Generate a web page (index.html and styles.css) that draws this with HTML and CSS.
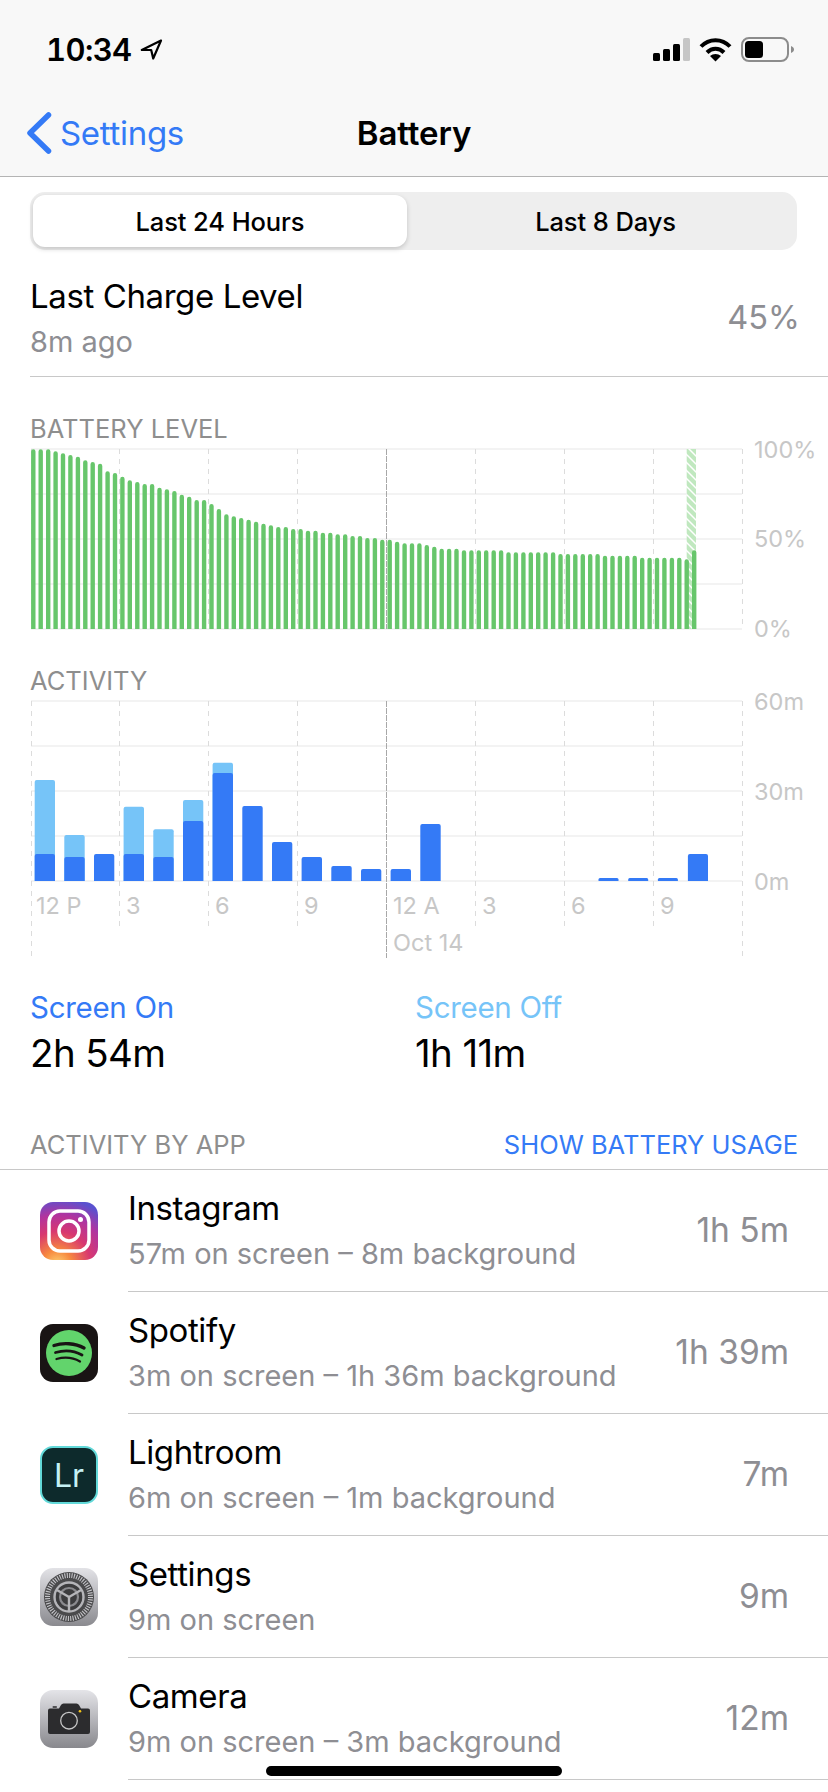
FILE: index.html
```html
<!DOCTYPE html>
<html>
  <head>
    <meta charset="utf-8">
    <title>Battery</title>
    <link rel="stylesheet" href="styles.css">
  </head>
  <body>
  <div class="screen">

    <header class="top">
      <div class="status">
        <div class="clock">
          <span>10:34</span>
          <svg class="arrow" width="23" height="21" viewBox="0 0 23 21"><path d="M21 1.5 1.8 11h9.4l2 8.5z" fill="none" stroke="#000" stroke-width="2.2" stroke-linejoin="round"/></svg>
        </div>
        <div class="status-icons">
          <svg width="37" height="23" viewBox="0 0 37 23">
            <rect x="0" y="15" width="7" height="8" rx="1.5"/>
            <rect x="10" y="11" width="7" height="12" rx="1.5"/>
            <rect x="20" y="6" width="7" height="17" rx="1.5"/>
            <rect x="30" y="0" width="7" height="23" rx="1.5" fill="#c6c6c6"/>
          </svg>
          <svg width="33" height="25" viewBox="0 0 33 25">
            <path d="M2 9.5C10 1 23 1 31 9.5" fill="none" stroke="#000" stroke-width="4"/>
            <path d="M8 15.5C13 10.5 20 10.5 25 15.5" fill="none" stroke="#000" stroke-width="4"/>
            <path d="M16.5 24.5 11 19c3-2.8 8-2.8 11 0z"/>
          </svg>
          <svg width="53" height="25" viewBox="0 0 53 25">
            <rect x="1" y="1" width="46" height="23" rx="7" fill="none" stroke="#8c8c8c" stroke-width="2"/>
            <rect x="4" y="4" width="18" height="17" rx="3.5"/>
            <path d="M50 9c2 .8 3 2 3 3.5s-1 2.7-3 3.5z" fill="#8c8c8c"/>
          </svg>
        </div>
      </div>
      <nav class="navbar">
        <a class="back">
          <svg width="26" height="42" viewBox="0 0 26 42"><path d="M22.5 3 4 21l18.5 18" fill="none" stroke="#347af6" stroke-width="5.5" stroke-linecap="round" stroke-linejoin="round"/></svg>
          <span>Settings</span>
        </a>
        <div class="nav-title">Battery</div>
      </nav>
    </header>

    <div class="segment">
      <div class="seg-item seg-on">Last 24 Hours</div>
      <div class="seg-item seg-off">Last 8 Days</div>
    </div>

    <div class="charge">
      <div class="charge-text">
        <div class="charge-title">Last Charge Level</div>
        <div class="charge-sub">8m ago</div>
      </div>
      <div class="charge-val">45%</div>
    </div>

    <div class="chart-head head-battery">BATTERY LEVEL</div>
    <svg class="chart chart-battery" width="828" height="200" viewBox="0 445 828 200">
      <defs>
        <pattern id="hatch" patternUnits="userSpaceOnUse" width="8" height="8">
          <rect width="8" height="8" fill="#c0e8bf"/>
          <path d="M-2 -2 10 10M-2 6 2 10M6 -2 10 2" stroke="#fff" stroke-width="1.5"/>
        </pattern>
        <clipPath id="base"><rect x="0" y="445" width="828" height="184"/></clipPath>
      </defs>
      <g class="grid">
        <path d="M31 449H742M31 494H742M31 539H742M31 584H742M31 629H742"/>
      </g>
      <g class="dash">
        <path d="M31.5 449V629M119.5 449V629M208.5 449V629M297.5 449V629M475.5 449V629M564.5 449V629M653.5 449V629M742.5 449V629"/>
      </g>
      <path class="midnight" d="M386.5 449V629"/>
      <rect x="686.7" y="449" width="9.3" height="180" fill="url(#hatch)"/>
      <!-- one stroke per 15 min -->
      <path class="level" clip-path="url(#base)" d="M33.3 632V451.5M40.7 632V451.5M48.2 632V451.5M55.6 632V453.5M63 632V455.5M70.4 632V457.2M77.9 632V458.9M85.3 632V462.5M92.7 632V464.2M100.1 632V465.9M107.6 632V473.5M115 632V475.2M122.4 632V478.9M129.8 632V482.5M137.3 632V484.2M144.7 632V486.2M152.1 632V486.2M159.5 632V489.9M166.9 632V491.5M174.4 632V493.2M181.8 632V496.9M189.2 632V498.9M196.7 632V502.2M204.1 632V502.2M211.5 632V506.2M218.9 632V511.2M226.4 632V516.5M233.8 632V518.5M241.2 632V520.2M248.6 632V521.9M256.1 632V523.9M263.5 632V525.9M270.9 632V527.5M278.3 632V529.2M285.8 632V529.2M293.2 632V531.2M300.6 632V531.2M308 632V532.9M315.5 632V532.9M322.9 632V534.9M330.3 632V534.9M337.7 632V536.5M345.2 632V536.5M352.6 632V538.2M360 632V538.2M367.4 632V540.2M374.9 632V540.2M382.3 632V541.9M389.7 632V541.9M397.1 632V543.9M404.6 632V545.5M412 632V545.5M419.4 632V545.5M426.8 632V547.2M434.3 632V548.9M441.7 632V550.9M449.1 632V550.9M456.5 632V550.9M464 632V552.5M471.4 632V552.5M478.8 632V552.5M486.2 632V552.5M493.7 632V552.5M501.1 632V552.5M508.5 632V554.5M515.9 632V554.5M523.4 632V554.5M530.8 632V554.5M538.2 632V554.5M545.6 632V554.5M553.1 632V554.5M560.5 632V556.2M567.9 632V556.2M575.3 632V556.2M582.8 632V556.2M590.2 632V556.2M597.6 632V556.2M605 632V557.9M612.5 632V557.9M619.9 632V557.9M627.3 632V557.9M634.7 632V557.9M642.2 632V559.9M649.6 632V559.9M657 632V559.9M664.4 632V559.9M671.9 632V559.9M679.3 632V559.9M686.7 632V561.5M694.2 632V552.5"/>
      <text class="axis" x="754" y="458">100%</text>
      <text class="axis" x="754" y="547">50%</text>
      <text class="axis" x="754" y="637">0%</text>
    </svg>

    <div class="chart-head head-activity">ACTIVITY</div>
    <svg class="chart chart-activity" width="828" height="270" viewBox="0 695 828 270">
      <g class="grid">
        <path d="M31 701H742M31 746H742M31 791H742M31 836H742M31 881H742"/>
      </g>
      <g class="dash">
        <path d="M31.5 701V958M119.5 701V926M208.5 701V926M297.5 701V926M475.5 701V926M564.5 701V926M653.5 701V926M742.5 701V958"/>
      </g>
      <path class="midnight" d="M386.5 701V958"/>
      <g class="off">
        <path d="M34.7 881V782a2 2 0 0 1 2-2H53a2 2 0 0 1 2 2V881z"/>
        <path d="M64.3 881V837a2 2 0 0 1 2-2H82.7a2 2 0 0 1 2 2V881z"/>
        <path d="M123.6 881V808.7a2 2 0 0 1 2-2H142a2 2 0 0 1 2 2V881z"/>
        <path d="M153.3 881V831.3a2 2 0 0 1 2-2H171.7a2 2 0 0 1 2 2V881z"/>
        <path d="M183 881V802a2 2 0 0 1 2-2H201.3a2 2 0 0 1 2 2V881z"/>
        <path d="M212.6 881V764.7a2 2 0 0 1 2-2H231a2 2 0 0 1 2 2V881z"/>
      </g>
      <g class="on">
        <path d="M34.7 881V856a2 2 0 0 1 2-2H53a2 2 0 0 1 2 2V881z"/>
        <path d="M64.3 881V859a2 2 0 0 1 2-2H82.7a2 2 0 0 1 2 2V881z"/>
        <path d="M94 881V856a2 2 0 0 1 2-2H112.3a2 2 0 0 1 2 2V881z"/>
        <path d="M123.6 881V856a2 2 0 0 1 2-2H142a2 2 0 0 1 2 2V881z"/>
        <path d="M153.3 881V859a2 2 0 0 1 2-2H171.7a2 2 0 0 1 2 2V881z"/>
        <path d="M183 881V823a2 2 0 0 1 2-2H201.3a2 2 0 0 1 2 2V881z"/>
        <path d="M212.6 881V775a2 2 0 0 1 2-2H231a2 2 0 0 1 2 2V881z"/>
        <path d="M242.3 881V808a2 2 0 0 1 2-2H260.7a2 2 0 0 1 2 2V881z"/>
        <path d="M272 881V844a2 2 0 0 1 2-2H290.3a2 2 0 0 1 2 2V881z"/>
        <path d="M301.6 881V859a2 2 0 0 1 2-2H320a2 2 0 0 1 2 2V881z"/>
        <path d="M331.3 881V868a2 2 0 0 1 2-2H349.7a2 2 0 0 1 2 2V881z"/>
        <path d="M361 881V871a2 2 0 0 1 2-2H379.3a2 2 0 0 1 2 2V881z"/>
        <path d="M390.6 881V871a2 2 0 0 1 2-2H409a2 2 0 0 1 2 2V881z"/>
        <path d="M420.3 881V826a2 2 0 0 1 2-2H438.7a2 2 0 0 1 2 2V881z"/>
        <path d="M598.5 881V879.5a1.5 1.5 0 0 1 1.5-1.5H617a1.5 1.5 0 0 1 1.5 1.5V881z"/>
        <path d="M628.2 881V879.5a1.5 1.5 0 0 1 1.5-1.5H646.7a1.5 1.5 0 0 1 1.5 1.5V881z"/>
        <path d="M657.9 881V879.5a1.5 1.5 0 0 1 1.5-1.5H676.4a1.5 1.5 0 0 1 1.5 1.5V881z"/>
        <path d="M687.9 881V856a2 2 0 0 1 2-2H706a2 2 0 0 1 2 2V881z"/>
      </g>
      <text class="axis" x="754" y="710">60m</text>
      <text class="axis" x="754" y="800">30m</text>
      <text class="axis" x="754" y="890">0m</text>
      <text class="axis" x="36" y="914">12 P</text>
      <text class="axis" x="126" y="914">3</text>
      <text class="axis" x="215" y="914">6</text>
      <text class="axis" x="304" y="914">9</text>
      <text class="axis" x="393" y="914">12 A</text>
      <text class="axis" x="482" y="914">3</text>
      <text class="axis" x="571" y="914">6</text>
      <text class="axis" x="660" y="914">9</text>
      <text class="axis" x="393" y="951">Oct 14</text>
    </svg>

    <div class="totals">
      <div>
        <div class="total-label label-on">Screen On</div>
        <div class="total-val">2h 54m</div>
      </div>
      <div>
        <div class="total-label label-off">Screen Off</div>
        <div class="total-val">1h 11m</div>
      </div>
    </div>

    <div class="apps-head">
      <span class="apps-title">ACTIVITY BY APP</span>
      <a class="apps-link">SHOW BATTERY USAGE</a>
    </div>

    <div class="app">
      <svg class="app-icon" width="58" height="58" viewBox="0 0 58 58">
        <defs>
          <radialGradient id="insta" cx="0.3" cy="1.08" r="1.15">
            <stop offset="0" stop-color="#fdd474"/>
            <stop offset="0.22" stop-color="#f7883f"/>
            <stop offset="0.5" stop-color="#d8386f"/>
            <stop offset="0.75" stop-color="#b1349f"/>
            <stop offset="1" stop-color="#5a51cf"/>
          </radialGradient>
        </defs>
        <rect width="58" height="58" rx="13" fill="url(#insta)"/>
        <rect x="9" y="9" width="40" height="40" rx="11" fill="none" stroke="#fff" stroke-width="3.5"/>
        <circle cx="29" cy="29" r="10" fill="none" stroke="#fff" stroke-width="3.5"/>
        <circle cx="40.5" cy="17.5" r="2.5" fill="#fff"/>
      </svg>
      <div class="app-body">
        <div>
          <div class="app-name">Instagram</div>
          <div class="app-sub">57m on screen – 8m background</div>
        </div>
        <div class="app-val">1h 5m</div>
      </div>
    </div>

    <div class="app">
      <svg class="app-icon" width="58" height="58" viewBox="0 0 58 58">
        <rect width="58" height="58" rx="13" fill="#191414"/>
        <circle cx="29" cy="29" r="23" fill="#62d46c"/>
        <g fill="none" stroke="#191414" stroke-linecap="round">
          <path d="M14 21.5C23 18.5 35 19 44 24" stroke-width="3.4"/>
          <path d="M15.5 28.5C24 26 34 26.5 42 31" stroke-width="2.8"/>
          <path d="M16.5 35C24 33 33 33.5 40 37.5" stroke-width="2.3"/>
        </g>
      </svg>
      <div class="app-body">
        <div>
          <div class="app-name">Spotify</div>
          <div class="app-sub">3m on screen – 1h 36m background</div>
        </div>
        <div class="app-val">1h 39m</div>
      </div>
    </div>

    <div class="app">
      <div class="app-icon lr-icon">Lr</div>
      <div class="app-body">
        <div>
          <div class="app-name">Lightroom</div>
          <div class="app-sub">6m on screen – 1m background</div>
        </div>
        <div class="app-val">7m</div>
      </div>
    </div>

    <div class="app">
      <svg class="app-icon" width="58" height="58" viewBox="0 0 58 58">
        <defs>
          <linearGradient id="metal" x1="0" y1="0" x2="0" y2="1">
            <stop offset="0" stop-color="#e2e2e6"/>
            <stop offset="1" stop-color="#8a8a8f"/>
          </linearGradient>
        </defs>
        <rect width="58" height="58" rx="13" fill="url(#metal)"/>
        <circle cx="29" cy="29" r="25" fill="#4a4a4c"/>
        <circle cx="29" cy="29" r="21.5" fill="none" stroke="#c4c4c8" stroke-width="5" stroke-dasharray="1.1 1.3"/>
        <circle cx="29" cy="29" r="18.5" fill="#4a4a4c"/>
        <circle cx="29" cy="29" r="14.5" fill="none" stroke="#b5b5b9" stroke-width="2.4"/>
        <circle cx="29" cy="29" r="13" fill="#3c3c3e"/>
        <circle cx="29" cy="29" r="9" fill="none" stroke="#8a8a8e" stroke-width="2.2"/>
        <g stroke="#b5b5b9" stroke-width="2.4">
          <path d="M29 29V43"/>
          <path d="M29 29 16.9 22"/>
          <path d="M29 29 41.1 22"/>
        </g>
      </svg>
      <div class="app-body">
        <div>
          <div class="app-name">Settings</div>
          <div class="app-sub">9m on screen</div>
        </div>
        <div class="app-val">9m</div>
      </div>
    </div>

    <div class="app">
      <svg class="app-icon" width="58" height="58" viewBox="0 0 58 58">
        <defs>
          <linearGradient id="metal2" x1="0" y1="0" x2="0" y2="1">
            <stop offset="0" stop-color="#e4e4e8"/>
            <stop offset="1" stop-color="#88888d"/>
          </linearGradient>
        </defs>
        <rect width="58" height="58" rx="13" fill="url(#metal2)"/>
        <path d="M8 20.5a2 2 0 0 1 2-2h9l2-3.5a3 3 0 0 1 2.5-1.5h13a3 3 0 0 1 2.5 1.5l2 3.5h7a2 2 0 0 1 2 2V42a2 2 0 0 1-2 2H10a2 2 0 0 1-2-2z" fill="#2c2c2e"/>
        <rect x="12.5" y="16.3" width="4.5" height="1.5" rx=".7" fill="#2c2c2e"/>
        <circle cx="29" cy="30.7" r="8.3" fill="none" stroke="#c8c8c8" stroke-width="1.3"/>
        <circle cx="40" cy="21.3" r="1.3" fill="#f5c518"/>
      </svg>
      <div class="app-body">
        <div>
          <div class="app-name">Camera</div>
          <div class="app-sub">9m on screen – 3m background</div>
        </div>
        <div class="app-val">12m</div>
      </div>
    </div>

    <div class="home-bar"></div>
  </div>
  </body>
</html>
```

FILE: styles.css
```css
* {
  box-sizing: border-box;
}
body {
  margin: 0;
  background: #fff;
  font-family: Inter, "Noto Sans", sans-serif;
  color: #000;
}
.screen {
  position: relative;
  width: 828px;
  height: 1792px;
  overflow: hidden;
}

/* status + nav */
.top {
  height: 177px;
  background: #f8f8f8;
  border-bottom: 1px solid #b4b4b4;
}
.status {
  display: flex;
  justify-content: space-between;
  align-items: center;
  height: 99px;
  padding: 0 34px 0 46px;
}
.clock {
  display: flex;
  align-items: center;
  gap: 8px;
  font-size: 31px;
  font-weight: 600;
  font-variant-numeric: tabular-nums;
  letter-spacing: -0.6px;
}
.status-icons {
  display: flex;
  align-items: center;
  gap: 9px;
}
.navbar {
  display: grid;
  grid-template-columns: 1fr auto 1fr;
  align-items: center;
  height: 68px;
  padding: 0 26px;
}
.back {
  display: flex;
  align-items: center;
  gap: 8px;
  font-size: 33px;
  color: #347af6;
  letter-spacing: -0.3px;
}
.nav-title {
  font-size: 33px;
  font-weight: 600;
  letter-spacing: -0.1px;
}

/* 24h / 8d switch */
.segment {
  display: flex;
  height: 58px;
  margin: 15px 31px 0 30px;
  padding: 3px;
  background: #eeeeee;
  border-radius: 15px;
}
.seg-item {
  display: flex;
  align-items: center;
  justify-content: center;
  font-size: 25.5px;
  font-weight: 500;
  letter-spacing: -0.1px;
}
.seg-on {
  flex: none;
  width: 374px;
  background: #fff;
  border-radius: 12px;
  box-shadow: 0 2px 5px rgb(0 0 0 / 18%);
}
.seg-off {
  flex: 1;
  padding-left: 10px;
}

.charge {
  display: flex;
  justify-content: space-between;
  align-items: center;
  height: 127px;
  margin-left: 30px;
  padding: 8px 28px 0 0;
  border-bottom: 1px solid #c8c8c8;
}
.charge-text {
  padding-top: 4px;
}
.charge-title {
  font-size: 33px;
  letter-spacing: -0.4px;
  line-height: 46px;
}
.charge-sub {
  font-size: 29px;
  color: #8e8e93;
  line-height: 46px;
}
.charge-val {
  font-size: 32.5px;
  color: #8e8e93;
}

/* charts */
.chart-head {
  font-size: 25.5px;
  color: #8e8e8e;
  padding-left: 30px;
}
.head-battery {
  height: 68px;
  padding-top: 36px;
  line-height: 32px;
}
.head-activity {
  height: 50px;
  padding-top: 21px;
  line-height: 30px;
}
.chart {
  display: block;
  overflow: visible;
}
.grid path {
  fill: none;
  stroke: #efefef;
  stroke-width: 1.5;
}
.dash path {
  fill: none;
  stroke: #dcdcdc;
  stroke-width: 1;
  stroke-dasharray: 5 5;
}
.midnight {
  fill: none;
  stroke: #a8a8a8;
  stroke-width: 1;
  stroke-dasharray: 6 1;
}
.level {
  fill: none;
  stroke: #67c66b;
  stroke-width: 4.4;
  stroke-linecap: round;
}
.axis {
  font-size: 23.5px;
  fill: #c7c7c7;
}
.off {
  fill: #76c4f8;
}
.on {
  fill: #347af6;
}

/* totals */
.totals {
  display: grid;
  grid-template-columns: 385px 1fr;
  height: 142px;
  padding: 22px 0 0 30px;
}
.total-label {
  font-size: 29.5px;
  letter-spacing: -0.3px;
  line-height: 41px;
}
.label-on {
  color: #347af6;
}
.label-off {
  color: #76c4f8;
}
.total-val {
  font-size: 38.5px;
  letter-spacing: -0.6px;
  line-height: 50px;
}

.apps-head {
  display: flex;
  justify-content: space-between;
  align-items: center;
  height: 63px;
  padding: 12px 30px 0;
  font-size: 25.5px;
  border-bottom: 1px solid #c8c8c8;
}
.apps-title {
  color: #8e8e8e;
}
.apps-link {
  color: #347af6;
}

/* app rows */
.app {
  display: flex;
  align-items: center;
  height: 122px;
}
.app-icon {
  flex: none;
  width: 58px;
  height: 58px;
  margin: 0 30px 0 40px;
}
.lr-icon {
  display: flex;
  align-items: center;
  justify-content: center;
  background: #0d2a2c;
  border: 2.5px solid #62d9d9;
  border-radius: 13px;
  color: #c4f1f5;
  font-size: 32px;
}
.app-body {
  flex: 1;
  display: flex;
  justify-content: space-between;
  align-items: center;
  height: 122px;
  padding: 0 39px 2px 0;
  border-bottom: 1px solid #c8c8c8;
}
.app-name {
  padding-top: 4px;
  font-size: 33px;
  letter-spacing: -0.4px;
  line-height: 44px;
}
.app-sub {
  font-size: 29px;
  color: #8e8e93;
  line-height: 48px;
}
.app-val {
  font-size: 33.5px;
  color: #8e8e93;
}

.home-bar {
  position: absolute;
  left: 266px;
  bottom: 16px;
  width: 296px;
  height: 10px;
  border-radius: 5px;
  background: #000;
}
```
